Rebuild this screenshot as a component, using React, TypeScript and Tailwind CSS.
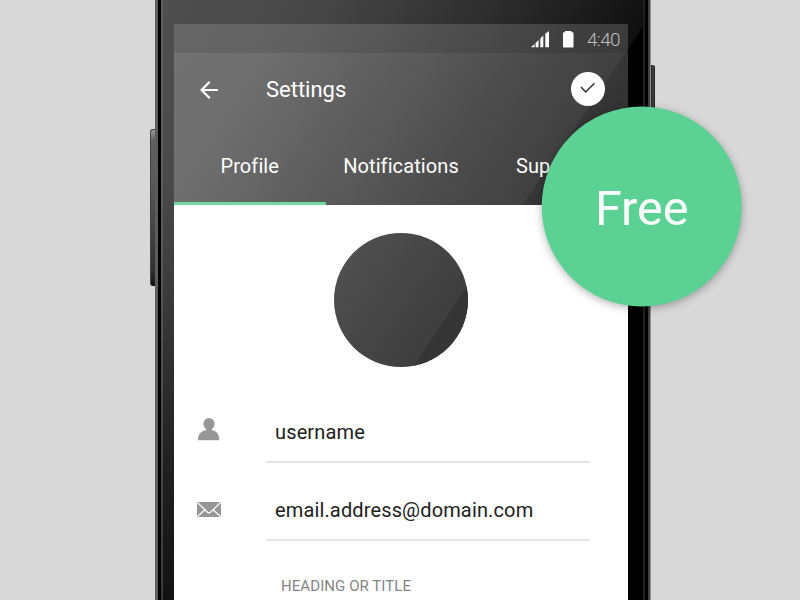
import React from "react";

function StatusBar() {
  return (
    <div className="flex h-[29px] items-start justify-end bg-black/10 pr-2">
      <svg className="mt-[7px] block" width="18" height="17" viewBox="0 0 18 17" fill="#fff">
        <path d="M0 16.3 3.500 13v3.300zM4.600 12 7.600 9v7.300h-3zM9.300 7.500l3-3v11.800h-3zM14.300 2.700 18 0v16.300h-3.700z" />
      </svg>
      <svg className="ml-[13.500px] mt-[7px] block" width="11" height="17" viewBox="0 0 11 17" fill="#fff">
        <path d="M2 0h6.500v1.200H10l.5 1V16l-.6.600H.6L0 16V2.200l.5-1H2z" />
      </svg>
      <span className="ml-[13.500px] mt-[1px] w-[33px] whitespace-nowrap text-[19px] font-light leading-[29px] tracking-[-0.7px] text-[#bdbdbd]">
        4:40
      </span>
    </div>
  );
}

function Header() {
  return (
    <header className="relative h-[181px] bg-[linear-gradient(122deg,#727272_0%,#6e6e6e_20%,#595959_48%,#484848_70%,#3d3d3d_88%,#3a3a3a_100%)] text-white">
      <div className="absolute inset-0 bg-black/15 [clip-path:polygon(454px_25px,454px_181px,348.5px_181px)]" />
      <div className="relative">
        <StatusBar />
        <div className="flex h-[72px] items-center pl-[26px] pr-[23px]">
          <svg className="mt-px block" width="18" height="18" viewBox="0 0 18 18" fill="none" stroke="#fff" strokeWidth="2.200">
            <path d="M9.700.8 1.600 9l8.100 8.200M1.600 9H18" />
          </svg>
          <h1 className="ml-12 mt-[2px] flex-1 text-[22px] leading-7">Settings</h1>
          <span className="mb-[1px] flex size-[34px] items-center justify-center rounded-full bg-white">
            <svg className="mb-px block" width="16" height="12" viewBox="0 0 16 12" fill="none" stroke="#333" strokeWidth="1.500">
              <path d="M1 5 5.700 10 14.500 1.200" />
            </svg>
          </span>
        </div>
        <nav className="flex h-20 text-[20px] leading-[24px] tracking-[0.1px]">
          <span className="h-20 w-[151.500px] border-b-[3px] border-[#6fdba0] pt-[29px] text-center">Profile</span>
          <span className="w-[151px] pt-[29px] text-center">Notifications</span>
          <span className="w-[151px] pl-[39.500px] pt-[29px]">Support</span>
        </nav>
      </div>
    </header>
  );
}

function Field({ icon, value }: { icon: React.ReactNode; value: string }) {
  return (
    <div className="flex h-[78px]">
      <div className="w-[92px] shrink-0 pl-[23px]">{icon}</div>
      <div className="h-[78px] w-[324px] border-b-2 border-[#e4e4e4] pl-[9px] pt-[34px] text-[20px] leading-[26px] tracking-[0.14px] text-[#212121]">
        {value}
      </div>
    </div>
  );
}

function Screen() {
  return (
    <main className="h-[600px] w-[454px] shrink-0 overflow-hidden pt-6">
      <Header />
      <div className="h-[395px] bg-white pt-7">
        <div className="ml-[160px] size-[134px] overflow-hidden rounded-full bg-[linear-gradient(125deg,#505050_10%,#474747_40%,#3b3b3b_90%)]">
          <div className="size-full bg-[#353535] [clip-path:polygon(134px_52px,134px_134px,79px_134px)]" />
        </div>
        <div className="mt-[18px]">
          <Field
            value="username"
            icon={
              <svg className="mt-[33px] block" width="23" height="23" viewBox="0 0 23 23" fill="#969696">
                <ellipse cx="12" cy="5.900" rx="5.600" ry="5.900" />
                <path d="M9 10h6v2.200c5 .8 7.200 3.800 7.200 10H1c0-6.200 3-9.200 8-10z" />
              </svg>
            }
          />
          <Field
            value="email.address@domain.com"
            icon={
              <svg className="mt-[39px] block" width="24" height="15" viewBox="0 0 24 15">
                <rect width="24" height="15" rx="1" fill="#969696" />
                <path d="M.5.500 10.200 10q1.800 1.600 3.600 0L23.500.5M.5 14.500l7.700-7M23.500 14.500l-7.700-7" fill="none" stroke="#fff" strokeWidth="1.200" />
              </svg>
            }
          />
        </div>
        <p className="ml-[107px] mt-[35px] text-[15px] leading-5 tracking-[0.07px] text-[#858585]">HEADING OR TITLE</p>
      </div>
    </main>
  );
}

export default function App() {
  return (
    <div className="relative flex h-[600px] w-[800px] overflow-hidden bg-[#d8d8d8] font-[Roboto,sans-serif]">
      <div className="mt-[129px] ml-[150px] h-[157px] w-[5px] shrink-0 rounded-l-[3px] border-l border-t border-[#444] bg-[linear-gradient(180deg,#999_0%,#606060_7%,#5c5c5c_30%,#303030_90%,#111_100%)]" />
      <div className="relative flex h-[600px] w-[496px] shrink-0 bg-[linear-gradient(123deg,#4e4e4e_0%,#4b4b4b_12%,#444_21%,#2e2e2e_38%,#202020_47%,#111_56%,#000_75%)]">
        <div className="w-[3px] shrink-0 bg-[#5a5c5d]" />
        <div className="w-[3px] shrink-0 bg-black" />
        <div className="w-[2px] shrink-0 bg-white/10" />
        <div className="w-[11px] shrink-0 bg-[linear-gradient(180deg,#4e4e4e_0%,#4a4a4a_30%,#3a3a3a_50%,#202020_78%,#121212_100%)]" />
        <Screen />
        <div className="h-[600px] w-[15px] shrink-0 bg-black [clip-path:polygon(0_49px,15px_27px,15px_600px,0_600px)]" />
        <div className="w-[2px] shrink-0 bg-[#202020]" />
        <div className="w-[3px] shrink-0 bg-black" />
        <div className="w-[2px] shrink-0 bg-[#414141]" />
        <div className="w-px shrink-0 bg-[#929292]" />
      </div>
      <div className="mt-[65px] h-[120px] w-1 shrink-0 rounded-tr-[2px] bg-[linear-gradient(90deg,#222,#444_60%,#111)]" />
      <div className="absolute left-[542px] top-[107px] flex size-[200px] translate-x-[-0.3px] translate-y-[-0.5px] items-center justify-center rounded-full bg-[#5bd193] pt-[3px] text-[48.500px] leading-[56px] text-white shadow-[0_2px_8px_rgba(0,0,0,0.3)]">
        Free
      </div>
    </div>
  );
}
